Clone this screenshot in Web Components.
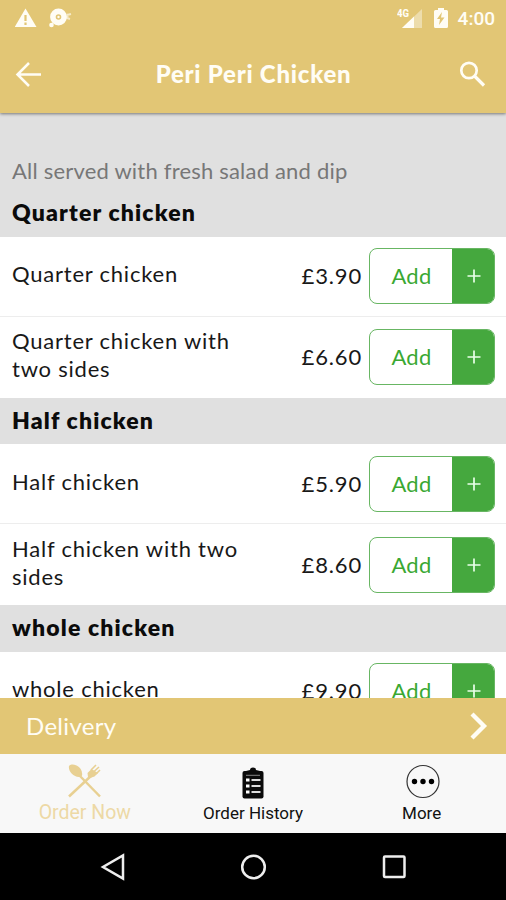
<!DOCTYPE html>
<html lang="en"><head><meta charset="utf-8"><title>Peri Peri Chicken</title>
<style>html,body{margin:0;height:100%}body{font-family:Lato,"Liberation Sans",sans-serif;overflow:hidden;background:#000}</style></head>
<body>
<order-app></order-app>
<script>
const define=(name,html)=>{const t=document.createElement('template');t.innerHTML=html;
customElements.define(name,class extends HTMLElement{constructor(){super();this.attachShadow({mode:'open'}).append(t.content.cloneNode(true));}});};

define('status-bar',`<style>:host{display:flex;height:36px;align-items:center;padding:0 11px 0 15px;box-sizing:border-box;color:#fffdf5;font:500 19px/36px Roboto,sans-serif}
svg{display:block}.gap{flex:1}.time{margin-left:9px;padding-top:2px}</style>
<svg width="60" height="36"><path d="M10.500 8.500 L21.500 27 H-.3Z" fill="#fffdf5"/><path d="M10.500 15v6M10.500 22.500v2.500" stroke="#e2c675" stroke-width="2.200"/>
<circle cx="43.500" cy="17" r="5.600" fill="none" stroke="#fffdf5" stroke-width="5.600"/><circle cx="43.500" cy="17" r="1.200" fill="#fffdf5"/><circle cx="36.500" cy="25" r="2.300" fill="#fffdf5"/><path d="M52 15l4-1M52 18l3 1M53 14l-1 5" fill="none" stroke="#fffdf5" stroke-opacity=".65" stroke-width="2"/></svg>
<span class="gap"></span>
<svg width="52" height="36"><text x="0" y="17" font-family="Roboto" font-weight="800" font-size="11" fill="#fffdf5" textLength="12" lengthAdjust="spacingAndGlyphs">4G</text><path d="M25 9V28H5Z" fill="#fff" opacity=".4"/><path d="M17 16.500V28H5Z" fill="#fffdf5"/><path d="M38.500 10h2.500V8h6v2H49.500q1.500 0 1.500 1.500V26.500Q51 28 49.500 28h-11Q37 28 37 26.500V11.500Q37 10 38.500 10Z" fill="#fffdf5"/><path d="M45 12l-5 7h3l-1 6 5.500-7.500h-3.500z" fill="#e2c675"/></svg>
<span class="time">4:00</span>`);

define('title-bar',`<style>:host{display:grid;grid-template-columns:60px 1fr 60px;height:77px;align-items:center;color:#fffdf5}
h1{margin:0;padding:0 0 1px 1px;text-align:center;font-size:24px;line-height:30px;font-weight:900;letter-spacing:.75px;white-space:nowrap}svg{display:block}</style>
<svg width="60" height="77" fill="none" stroke="#fffdf5" stroke-width="2.500"><path d="M41 38.500H18M29 27L17.500 38.500 29 50"/></svg><h1><slot></slot></h1>
<svg width="60" height="77" fill="none" stroke="#fffdf5"><circle cx="23" cy="34.500" r="7.700" stroke-width="2.700"/><path d="M28.500 40l9.500 9.500" stroke-width="3.200"/></svg>`);

define('section-heading',`<style>:host{display:block;box-sizing:border-box;height:var(--h,46px);padding:6px 12px 0;background:#e0e0e0;color:#0b0b0b;font-size:23px;line-height:32px;font-weight:800;letter-spacing:1.160px;white-space:nowrap}</style><slot></slot>`);

define('add-button',`<style>:host{display:flex;width:126px;height:56px;box-sizing:border-box;border:1px solid #68b663;border-radius:8px;overflow:hidden;background:#fff;color:#3aa832;font-size:22px}
span{flex:1;display:grid;place-items:center;letter-spacing:.3px;padding-left:1px}b{width:42px;display:grid;place-items:center;background:#45a83e}svg{margin-left:1px}</style>
<span>Add</span><b><svg width="14" height="14" stroke="#eaffea" stroke-width="1.700"><path d="M7 .5v13M.5 7h13"/></svg></b>`);

define('menu-item',`<style>:host{display:flex;align-items:center;height:var(--h,80px);box-sizing:border-box;padding:var(--t,0) 11px 2px 12px;background:#fff;border-bottom:var(--line,0) solid #ededed;color:#181818;font-size:22px;line-height:28px}
.n{width:240px;letter-spacing:.78px;padding-bottom:3px}.p{flex:1;text-align:right;margin-right:7px;letter-spacing:.85px;padding-top:1px}</style>
<div class="n"><slot></slot></div><div class="p"><slot name="price"></slot></div><add-button></add-button>`);

define('delivery-bar',`<style>:host{display:flex;height:56px;align-items:center;justify-content:space-between;padding:0 17px 2px 26px;box-sizing:border-box;background:#e2c675;color:#fffdf5;font-size:24px;letter-spacing:.3px;flex:none}svg{margin-top:2px}</style><slot></slot>
<svg width="20" height="28" fill="none" stroke="#fffdf5" stroke-width="4.300"><path d="M3 2l12 12L3 26"/></svg>`);

define('tab-item',`<style>:host{display:flex;flex-direction:column;align-items:center;height:79px;padding-top:9px;box-sizing:border-box;font:17px/24px Roboto,sans-serif;color:#111;white-space:nowrap}
.i{height:38px}::slotted(svg){display:block}</style><div class="i"><slot name="icon"></slot></div><slot></slot>`);

define('tab-bar',`<style>:host{display:grid;grid-template-columns:repeat(3,1fr);height:79px;background:#f8f8f8;flex:none}.on{color:#edd9a5;font-size:19.500px;padding-left:1px}</style>
<tab-item class="on"><svg slot="icon" width="34" height="36" fill="none" stroke="#e8d092"><path d="M10 11L32 33.500" stroke-width="2.500"/><path d="M1 33.500L24 12" stroke-width="2.500"/><path d="M1 3C5-1 14 4 14 10Q15 14 11 14C5 14 0 8 1 3Z" fill="#e8d092" stroke="none"/><path d="M20 14L19.500 10L23.500 6L30 10L26.500 13.500L22 15Z" fill="#e8d092" stroke="none"/><path d="M23 7L28 2M26 8.500L31 4M28 11L32 7" stroke-width="1.600"/></svg>Order Now</tab-item>
<tab-item><svg slot="icon" width="22" height="37"><rect x=".5" y="8" width="21" height="27.500" rx="2" fill="#0b0b0b"/><path d="M4 12V8L8 7Q8 4.500 11 4.500T14 7L18 8V12Z" fill="#0b0b0b"/><path d="M4 12.300H18" stroke="#bbb" stroke-width=".7"/><path d="M4 17h3.500M4 23h3.500M4 29h3.500" stroke="#fff" stroke-width="3.200"/><path d="M9.500 17h9M9.500 23h9M9.500 29h9" stroke="#ddd" stroke-width="2"/></svg>Order History</tab-item>
<tab-item><svg slot="icon" width="36" height="37"><circle cx="19" cy="18.500" r="16" fill="none" stroke="#333" stroke-width="1.200"/><g fill="#000"><circle cx="10.500" cy="18.500" r="2.700"/><circle cx="19" cy="18.500" r="2.700"/><circle cx="27.500" cy="18.500" r="2.700"/></g></svg>More</tab-item>`);

define('system-nav',`<style>:host{display:grid;grid-template-columns:repeat(3,140.500px);justify-content:center;justify-items:center;align-items:center;height:67px;background:#000;flex:none}svg{fill:none;stroke:#eee;stroke-width:2.500}</style>
<svg width="28" height="28"><path d="M24 2.500V25.500L4 14Z"/></svg><svg width="28" height="28"><circle cx="14.500" cy="14" r="11.300"/></svg><svg width="28" height="28"><rect x="4" y="3.500" width="20.500" height="20.500" rx="1"/></svg>`);

define('order-app',`<style>:host{display:flex;flex-direction:column;width:506px;height:900px;background:#e0e0e0}
header{background:#e2c675;flex:none;box-shadow:0 1px 3px #777;z-index:1}main{flex:1;overflow:hidden}
.intro{height:40px;padding:44px 12px 0;color:#777;font-size:22px;line-height:28px;letter-spacing:.2px;white-space:nowrap}
.a{--h:80px;--line:1px}.b{--h:81px}.low{--t:2px}</style>
<header><status-bar></status-bar><title-bar>Peri Peri Chicken</title-bar></header>
<main><div class="intro">All served with fresh salad and dip</div>
<section-heading style="--h:40px;padding-top:0;line-height:31px">Quarter chicken</section-heading>
<menu-item class="a">Quarter chicken<span slot="price">£3.90</span></menu-item>
<menu-item class="b">Quarter chicken with two sides<span slot="price">£6.60</span></menu-item>
<section-heading>Half chicken</section-heading>
<menu-item class="a low">Half chicken<span slot="price">£5.90</span></menu-item>
<menu-item class="b low">Half chicken with two sides<span slot="price">£8.60</span></menu-item>
<section-heading style="--h:47px">whole chicken</section-heading>
<menu-item class="a">whole chicken<span slot="price">£9.90</span></menu-item></main>
<delivery-bar>Delivery</delivery-bar><tab-bar></tab-bar><system-nav></system-nav>`);
</script></body></html>
